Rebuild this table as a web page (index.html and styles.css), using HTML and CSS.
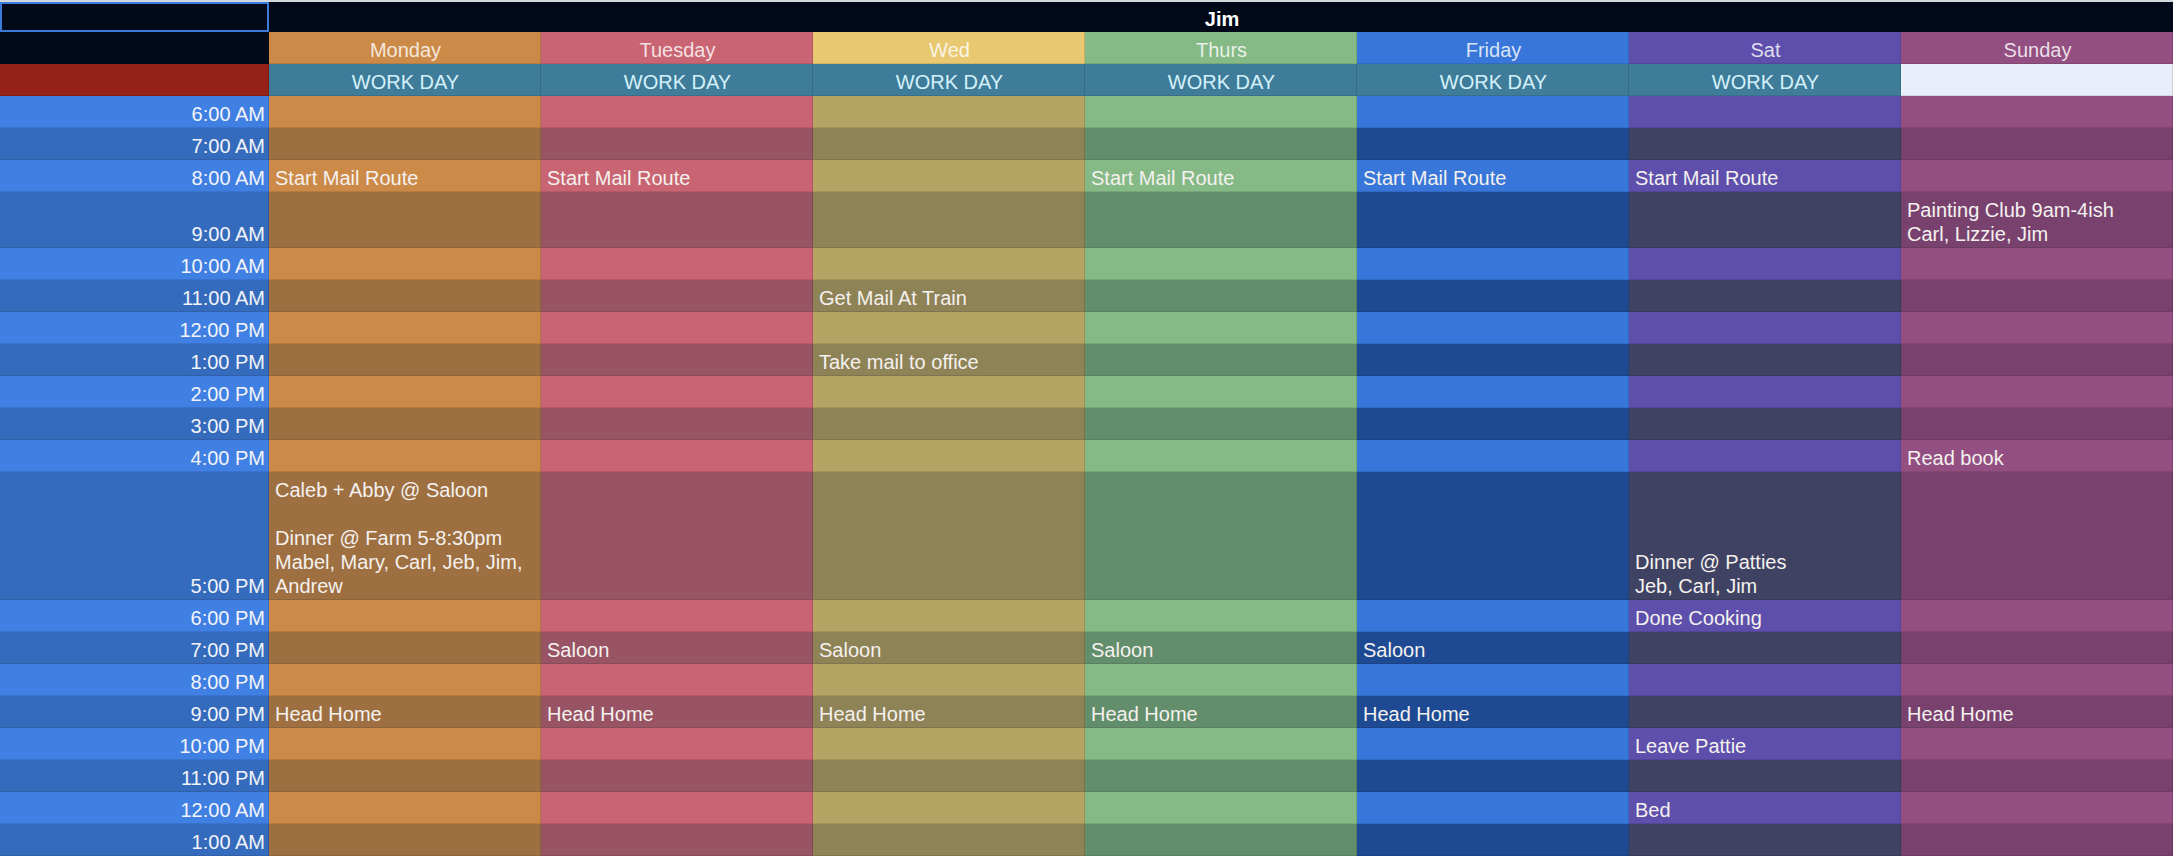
FILE: index.html
```html
<!DOCTYPE html>
<html lang="en">
<head>
<meta charset="utf-8">
<title>Jim schedule</title>
<link rel="stylesheet" href="styles.css">
</head>
<body>
<div class="topbar"></div>
<div class="sheet">
  <div class="c corner"></div>
  <div class="c title">Jim</div>

  <div class="c blank"></div>
  <div class="c day mon l">Monday</div>
  <div class="c day tue l">Tuesday</div>
  <div class="c day wedh">Wed</div>
  <div class="c day thu l">Thurs</div>
  <div class="c day fri l">Friday</div>
  <div class="c day sat l">Sat</div>
  <div class="c day sun l">Sunday</div>

  <div class="c red"></div>
  <div class="c work">WORK DAY</div>
  <div class="c work">WORK DAY</div>
  <div class="c work">WORK DAY</div>
  <div class="c work">WORK DAY</div>
  <div class="c work">WORK DAY</div>
  <div class="c work">WORK DAY</div>
  <div class="c workoff"></div>

  <div class="c time l">6:00 AM</div>
  <div class="c mon l"></div><div class="c tue l"></div><div class="c wed l"></div><div class="c thu l"></div><div class="c fri l"></div><div class="c sat l"></div><div class="c sun l"></div>

  <div class="c time d">7:00 AM</div>
  <div class="c mon d"></div><div class="c tue d"></div><div class="c wed d"></div><div class="c thu d"></div><div class="c fri d"></div><div class="c sat d"></div><div class="c sun d"></div>

  <div class="c time l">8:00 AM</div>
  <div class="c mon l">Start Mail Route</div><div class="c tue l">Start Mail Route</div><div class="c wed l"></div><div class="c thu l">Start Mail Route</div><div class="c fri l">Start Mail Route</div><div class="c sat l">Start Mail Route</div><div class="c sun l"></div>

  <div class="c time d">9:00 AM</div>
  <div class="c mon d"></div><div class="c tue d"></div><div class="c wed d"></div><div class="c thu d"></div><div class="c fri d"></div><div class="c sat d"></div><div class="c sun d">Painting Club 9am-4ish<br>Carl, Lizzie, Jim</div>

  <div class="c time l">10:00 AM</div>
  <div class="c mon l"></div><div class="c tue l"></div><div class="c wed l"></div><div class="c thu l"></div><div class="c fri l"></div><div class="c sat l"></div><div class="c sun l"></div>

  <div class="c time d">11:00 AM</div>
  <div class="c mon d"></div><div class="c tue d"></div><div class="c wed d">Get Mail At Train</div><div class="c thu d"></div><div class="c fri d"></div><div class="c sat d"></div><div class="c sun d"></div>

  <div class="c time l">12:00 PM</div>
  <div class="c mon l"></div><div class="c tue l"></div><div class="c wed l"></div><div class="c thu l"></div><div class="c fri l"></div><div class="c sat l"></div><div class="c sun l"></div>

  <div class="c time d">1:00 PM</div>
  <div class="c mon d"></div><div class="c tue d"></div><div class="c wed d">Take mail to office</div><div class="c thu d"></div><div class="c fri d"></div><div class="c sat d"></div><div class="c sun d"></div>

  <div class="c time l">2:00 PM</div>
  <div class="c mon l"></div><div class="c tue l"></div><div class="c wed l"></div><div class="c thu l"></div><div class="c fri l"></div><div class="c sat l"></div><div class="c sun l"></div>

  <div class="c time d">3:00 PM</div>
  <div class="c mon d"></div><div class="c tue d"></div><div class="c wed d"></div><div class="c thu d"></div><div class="c fri d"></div><div class="c sat d"></div><div class="c sun d"></div>

  <div class="c time l">4:00 PM</div>
  <div class="c mon l"></div><div class="c tue l"></div><div class="c wed l"></div><div class="c thu l"></div><div class="c fri l"></div><div class="c sat l"></div><div class="c sun l">Read book</div>

  <div class="c time d">5:00 PM</div>
  <div class="c mon d">Caleb + Abby @ Saloon<br><br>Dinner @ Farm 5-8:30pm<br>Mabel, Mary, Carl, Jeb, Jim,<br>Andrew</div><div class="c tue d"></div><div class="c wed d"></div><div class="c thu d"></div><div class="c fri d"></div><div class="c sat d">Dinner @ Patties<br>Jeb, Carl, Jim</div><div class="c sun d"></div>

  <div class="c time l">6:00 PM</div>
  <div class="c mon l"></div><div class="c tue l"></div><div class="c wed l"></div><div class="c thu l"></div><div class="c fri l"></div><div class="c sat l">Done Cooking</div><div class="c sun l"></div>

  <div class="c time d">7:00 PM</div>
  <div class="c mon d"></div><div class="c tue d">Saloon</div><div class="c wed d">Saloon</div><div class="c thu d">Saloon</div><div class="c fri d">Saloon</div><div class="c sat d"></div><div class="c sun d"></div>

  <div class="c time l">8:00 PM</div>
  <div class="c mon l"></div><div class="c tue l"></div><div class="c wed l"></div><div class="c thu l"></div><div class="c fri l"></div><div class="c sat l"></div><div class="c sun l"></div>

  <div class="c time d">9:00 PM</div>
  <div class="c mon d">Head Home</div><div class="c tue d">Head Home</div><div class="c wed d">Head Home</div><div class="c thu d">Head Home</div><div class="c fri d">Head Home</div><div class="c sat d"></div><div class="c sun d">Head Home</div>

  <div class="c time l">10:00 PM</div>
  <div class="c mon l"></div><div class="c tue l"></div><div class="c wed l"></div><div class="c thu l"></div><div class="c fri l"></div><div class="c sat l">Leave Pattie</div><div class="c sun l"></div>

  <div class="c time d">11:00 PM</div>
  <div class="c mon d"></div><div class="c tue d"></div><div class="c wed d"></div><div class="c thu d"></div><div class="c fri d"></div><div class="c sat d"></div><div class="c sun d"></div>

  <div class="c time l">12:00 AM</div>
  <div class="c mon l"></div><div class="c tue l"></div><div class="c wed l"></div><div class="c thu l"></div><div class="c fri l"></div><div class="c sat l">Bed</div><div class="c sun l"></div>

  <div class="c time d">1:00 AM</div>
  <div class="c mon d"></div><div class="c tue d"></div><div class="c wed d"></div><div class="c thu d"></div><div class="c fri d"></div><div class="c sat d"></div><div class="c sun d"></div>
</div>
</body>
</html>
```

FILE: styles.css
```css
html, body {
  margin: 0;
  padding: 0;
  background: #020a19;
  overflow: hidden;
}

body {
  font-family: "Liberation Sans", Arial, sans-serif;
  font-size: 20px;
  color: #f4f1ee;
}

.topbar {
  height: 2px;
  background: #d3d8dc;
}

.sheet {
  display: grid;
  grid-template-columns: 269px repeat(7, 272px);
  grid-template-rows: 30px 32px 32px 32px 32px 32px 56px repeat(7, 32px) 128px repeat(8, 32px);
}

.c {
  box-sizing: border-box;
  display: flex;
  align-items: flex-end;
  padding: 0 4px 1px 6px;
  line-height: 24px;
  white-space: nowrap;
  overflow: hidden;
  border-right: 1px solid rgba(0, 0, 0, 0.13);
  border-bottom: 1px solid rgba(0, 0, 0, 0.1);
}

.corner {
  background: #020a19;
  border: 2px solid #3a7bdc;
}

.title {
  grid-column: 2 / -1;
  justify-content: center;
  font-weight: bold;
  color: #ffffff;
  background: #020a19;
  border: none;
  padding-bottom: 1px;
}

.blank {
  background: #020a19;
  border: none;
}

.red {
  background: #952119;
}

.day {
  justify-content: center;
  color: rgba(255, 255, 255, 0.82);
}

.work {
  justify-content: center;
  background: #3f7c99;
  color: #d3f1fb;
}

.workoff {
  background: #e8effb;
}

.time {
  justify-content: flex-end;
  padding-right: 3px;
  color: #f2f4fa;
}

.time.l { background: #4080e2; }
.time.d { background: #356bbc; }

.mon.l { background: #cc8a48; }
.mon.d { background: #9e6f41; }

.tue.l { background: #c96472; }
.tue.d { background: #985464; }

.wedh { background: #e8c972; }
.wed.l { background: #b5a463; }
.wed.d { background: #8e8257; }

.thu.l { background: #85b986; }
.thu.d { background: #638e6b; }

.fri.l { background: #3876d9; }
.fri.d { background: #1d4a93; }

.sat.l { background: #5d4fab; }
.sat.d { background: #3f4262; }

.sun.l { background: #934f81; }
.sun.d { background: #79426e; }
```
